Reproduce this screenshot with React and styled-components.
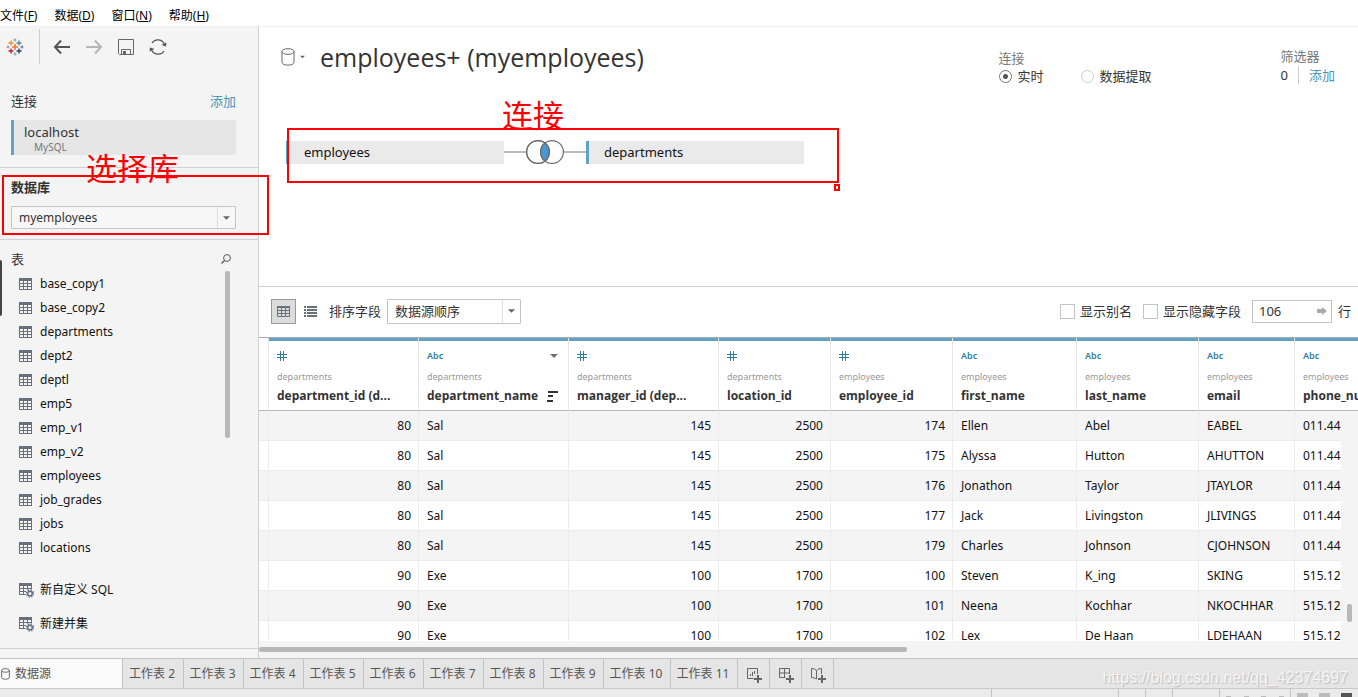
import React from "react";
import styled, { createGlobalStyle, css } from "styled-components";

const GlobalStyle = createGlobalStyle`
  *, *::before, *::after { box-sizing: border-box; }
  body {
    margin: 0;
    background: #fff;
    color: #111;
    font-family: "Noto Sans", "Noto Sans CJK SC", sans-serif;
    font-size: 13px;
    line-height: 20px;
  }
  button, input, select { font: inherit; color: inherit; margin: 0; }
  button { border: 0; padding: 0; background: none; cursor: pointer; }
  h1, h2, p, ul { margin: 0; padding: 0; font-size: inherit; font-weight: inherit; }
  ul { list-style: none; }
  a { color: #4996b9; text-decoration: none; }
  svg { display: block; flex: none; }
`;

const blue = "#5fa3c7";
const line = "#d0d0d0";

const Page = styled.div`
  display: flex;
  flex-direction: column;
  height: 100vh;
  overflow: hidden;
`;

const MenuBar = styled.nav`
  display: flex;
  flex: none;
  gap: 17px;
  height: 27px;
  padding-top: 6px;
  border-bottom: 1px solid #eee;
  font-size: 12px;
`;

const MenuItem = styled.button`
  height: 20px;
  line-height: 20px;
  white-space: nowrap;
  color: #000;
`;

const Body = styled.div`
  display: flex;
  flex: 1;
  min-height: 0;
`;

const Sidebar = styled.aside`
  position: relative;
  display: flex;
  flex-direction: column;
  flex: none;
  width: 259px;
  background: #f4f4f4;
  border-right: 1px solid ${line};
`;

const Toolbar = styled.div`
  display: flex;
  align-items: center;
  height: 39px;
  padding-left: 6px;
`;

const ToolSet = styled.div`
  display: flex;
  align-items: center;
  gap: 14px;
  height: 35px;
  margin-left: 15px;
  padding-left: 13px;
  border-left: 1px solid #ccc;
`;

const Connections = styled.section`
  height: 102px;
  padding: 25px 22px 0 11px;
  border-bottom: 1px solid ${line};
`;

const SectionHead = styled.div`
  display: flex;
  justify-content: space-between;
  align-items: center;
  height: 20px;
  color: #333;
`;

const Connection = styled.button`
  display: block;
  width: 100%;
  height: 35px;
  margin-top: 9px;
  padding: 2px 0 2px 10px;
  border-left: 3px solid ${blue};
  background: #e6e6e6;
  text-align: left;
  line-height: 18px;
  color: #333;
`;

const ConnectionKind = styled.span`
  display: block;
  padding-left: 10px;
  font-size: 10px;
  line-height: 12px;
  color: #777;
`;

const Database = styled.section`
  height: 72px;
  padding: 9px 22px 0 11px;
  border-bottom: 1px solid ${line};
  font-size: 12px;
`;

const FieldLabel = styled.label`
  display: block;
  margin-bottom: ${(p) => (p.$strong ? "9px" : 0)};
  font-size: 13px;
  font-weight: ${(p) => (p.$strong ? 700 : 400)};
  color: #333;
`;

const SelectBox = styled.div`
  display: grid;
  grid-template-columns: 1fr 18px;
  align-items: center;
  width: ${(p) => p.$width || "100%"};
  height: ${(p) => p.$height};
  border: 1px solid #c4c4c4;
  border-radius: 1px;
  background: ${(p) => p.$fill || "#fff"};

  > * { grid-row: 1; }
  > select { grid-column: 1 / 3; }
  > span { grid-column: 2; }
`;

const Select = styled.select`
  width: 100%;
  height: 100%;
  padding: 0 7px;
  border: 0;
  background: none;
  appearance: none;
  color: #333;
`;

const SelectArrow = styled.span`
  display: flex;
  align-items: center;
  justify-content: center;
  height: 100%;
  border-left: 1px solid #ddd;
  pointer-events: none;
`;

const Tables = styled.section`
  display: flex;
  flex: 1;
  flex-direction: column;
  min-height: 0;
  padding: 9px 27px 0 11px;
`;

const TableScroll = styled.div`
  display: flex;
  justify-content: space-between;
  align-items: flex-start;
  height: 290px;
`;

const TableList = styled.ul`
  padding: 3px 0 0 8px;
  font-size: 12px;
`;

const TableItem = styled.li`
  display: flex;
  align-items: center;
  gap: 8px;
  height: 24px;
`;

const Thumb = styled.div`
  flex: none;
  width: ${(p) => p.$w};
  height: ${(p) => p.$h};
  border-radius: 2px;
  background: #b8b8b8;
`;

const SideThumb = styled(Thumb)`
  margin: 2px 1px 0 0;
`;

const NewItems = styled.div`
  display: flex;
  flex-direction: column;
  gap: 14px;
  margin-top: 21px;
  padding-left: 8px;
`;

const NewItem = styled.button`
  display: flex;
  align-items: center;
  gap: 6px;
  height: 20px;
  font-size: 12px;
`;

const SideFoot = styled.div`
  flex: none;
  height: 10px;
  border-top: 1px solid ${line};
`;

const Main = styled.main`
  display: flex;
  flex: 1;
  flex-direction: column;
  min-width: 0;
`;

const Canvas = styled.section`
  position: relative;
  flex: none;
  height: 260px;
  padding: 10px 23px 0 22px;
  border-bottom: 1px solid ${line};
`;

const CanvasHead = styled.header`
  display: flex;
  height: 103px;
`;

const SourceButton = styled.button`
  display: flex;
  align-items: center;
  gap: 5px;
  height: 40px;
`;

const Title = styled.h1`
  flex: 1;
  padding-left: 15px;
  font-family: "Open Sans", "Noto Sans CJK SC", sans-serif;
  font-size: 25px;
  line-height: 40px;
  white-space: nowrap;
  color: #333;
`;

const Group = styled.div`
  padding-top: ${(p) => p.$top};
  line-height: 18px;
  white-space: nowrap;
  color: #777;
`;

const Options = styled.div`
  display: flex;
  gap: 37px;
  color: #333;
`;

const Option = styled.label`
  display: flex;
  align-items: center;
  gap: 6px;
  height: 18px;
`;

const Radio = styled.input`
  width: 13px;
  height: 13px;
  border: 1px solid ${(p) => (p.defaultChecked ? "#777" : "#ccc")};
  border-radius: 50%;
  appearance: none;

  &:checked { background: radial-gradient(circle, #555 2px, #fff 3px); }
`;

const FilterGroup = styled(Group)`
  margin-left: 129px;
`;

const FilterLine = styled.div`
  display: flex;
  align-items: center;
  height: 20px;
  color: #333;

  a {
    margin-left: 10px;
    padding-left: 10px;
    border-left: 1px solid #ccc;
  }
`;

const Join = styled.div`
  display: flex;
  align-items: center;
  padding-left: 5px;
`;

const JoinTable = styled.button`
  width: 218px;
  height: 23px;
  padding-left: 15px;
  border-left: 3px solid ${blue};
  background: #eaeaea;
  text-align: left;
  color: #111;
`;

const JoinLine = styled.span`
  width: 22px;
  height: 2px;
  background: #bbb;
`;

const Frame = styled.div`
  position: absolute;
  border: 2px solid #f00;
  pointer-events: none;
`;

const DatabaseFrame = styled(Frame)`
  z-index: 2;
  top: 148px;
  left: 2px;
  width: 267px;
  height: 60px;
`;

const JoinFrame = styled(Frame)`
  top: 101px;
  left: 28px;
  width: 552px;
  height: 55px;
`;

const FrameHandle = styled(Frame)`
  top: 157px;
  left: 575px;
  width: 6px;
  height: 7px;
`;

const Note = styled.p`
  position: absolute;
  z-index: 2;
  top: ${(p) => p.$top};
  left: ${(p) => p.$left};
  font-size: 31px;
  line-height: 40px;
  white-space: nowrap;
  color: #f00;
`;

const EdgeGrip = styled.div`
  position: absolute;
  top: 233px;
  left: 0;
  width: 2px;
  height: 56px;
  border-radius: 0 2px 2px 0;
  background: #444;
`;

const GridBar = styled.div`
  display: flex;
  flex: none;
  align-items: center;
  gap: 6px;
  height: 50px;
  padding: 0 7px 2px 12px;
  white-space: nowrap;
  color: #333;
`;

const ViewSwitch = styled.div`
  display: flex;
  gap: 2px;
`;

const ViewButton = styled.button`
  display: flex;
  align-items: center;
  justify-content: center;
  width: 25px;
  height: 25px;
  ${(p) => p.$on && css`
    border: 1px solid #999;
    background: #dcdcdc;
  `}
`;

const Spacer = styled.span`
  flex: 1;
`;

const CheckLabel = styled.label`
  display: flex;
  align-items: center;
  gap: 5px;
  margin-right: 5px;
`;

const Check = styled.input`
  width: 15px;
  height: 15px;
  border: 1px solid #c4c4c4;
  background: #fff;
  appearance: none;
`;

const RowCount = styled.div`
  display: flex;
  align-items: center;
  width: 80px;
  height: 23px;
  padding-right: 4px;
  border: 1px solid #c4c4c4;

  input {
    width: 0;
    flex: 1;
    padding: 0 6px;
    border: 0;
    outline: 0;
    background: none;
  }
`;

const GridArea = styled.div`
  position: relative;
  flex: 1;
  min-height: 0;
  overflow: hidden;
  border-top: 1px solid #aaa;
`;

const Grid = styled.table`
  width: 1122px;
  border-collapse: separate;
  border-spacing: 0;
  table-layout: fixed;
`;

const HeadCell = styled.th`
  height: 73px;
  padding: 8px 0 0 8px;
  border-left: 1px solid #e6e6e6;
  border-bottom: 1px solid #b8b8b8;
  box-shadow: inset 0 3px ${blue};
  vertical-align: top;
  text-align: left;
  font-weight: 400;
  overflow: hidden;
  white-space: nowrap;
`;

const GutterHead = styled.th`
  border-bottom: 1px solid #b8b8b8;
`;

const TypeLine = styled.div`
  display: flex;
  align-items: center;
  justify-content: space-between;
  height: 20px;
  padding-right: 10px;
  font-size: 9px;
  font-weight: 600;
  color: #2f7d9d;
`;

const SourceName = styled.div`
  margin-top: 1px;
  font-size: 9px;
  color: #999;
`;

const FieldName = styled.div`
  display: flex;
  align-items: center;
  justify-content: space-between;
  height: 18px;
  padding-right: 10px;
  font-family: "Open Sans", "Noto Sans CJK SC", sans-serif;
  font-size: 12px;
  font-weight: 700;
  color: #333;
`;

const Row = styled.tr`
  background: #fff;
  &:nth-child(odd) { background: #f4f4f4; }
`;

const Cell = styled.td`
  height: 30px;
  padding: 0 7px 0 8px;
  border-left: ${(p) => (p.$gutter ? 0 : "1px solid #ececec")};
  border-bottom: 1px solid #ececec;
  text-align: ${(p) => (p.$num ? "right" : "left")};
  overflow: hidden;
  white-space: nowrap;
  font-size: 12px;
  color: #111;
`;

const VTrack = styled.div`
  position: absolute;
  top: 73px;
  right: 0;
  bottom: 0;
  display: flex;
  align-items: flex-end;
  justify-content: center;
  width: 17px;
  padding-bottom: 19px;
  background: #f4f4f4;
`;

const HTrack = styled.div`
  flex: none;
  height: 17px;
  padding-top: 6px;
  background: #f4f4f4;
`;

const SheetTabs = styled.nav`
  position: relative;
  display: flex;
  flex: none;
  height: 31px;
  border-top: 1px solid #c4c4c4;
  border-bottom: 1px solid #c8c8c8;
  background: #e5e5e5;
`;

const SheetTab = styled.button`
  display: flex;
  align-items: center;
  justify-content: ${(p) => (p.$on ? "flex-start" : "center")};
  gap: 5px;
  width: ${(p) => p.$w};
  padding: 0 ${(p) => (p.$on ? 0 : "2px")} 0 ${(p) => (p.$on ? "1px" : 0)};
  border-right: 1px solid #c4c4c4;
  background: ${(p) => (p.$on ? "#fafafa" : "none")};
  font-size: 12px;
  white-space: nowrap;
  color: #555;
`;

const AddTab = styled(SheetTab)`
  padding: 2px 0 0 1px;
`;

const Watermark = styled.p`
  position: absolute;
  top: 9px;
  right: 10px;
  font-family: "Liberation Sans", sans-serif;
  font-size: 16px;
  color: #f5f5f5;
  text-shadow: 1px 1px 1px #bbb;
`;

const StatusBar = styled.footer`
  display: flex;
  flex: none;
  justify-content: flex-end;
  height: 8px;
  overflow: hidden;
  background: #ebebeb;
`;

const StatusCell = styled.span`
  display: flex;
  align-items: flex-end;
  justify-content: space-around;
  width: ${(p) => p.$w};
  border-left: 1px solid #c4c4c4;
`;

const StatusMark = styled.i`
  width: 11px;
  height: 4px;
  background: ${(p) => p.$tone};
`;

const NavMark = styled.i`
  width: 5px;
  height: 1px;
  background: #bbb;
`;

const Caret = ({ size = 7, color = "#666" }) => (
  <svg width={size} height="4" viewBox="0 0 8 4"><path d="M0 0h8L4 4z" fill={color} /></svg>
);

const Logo = () => {
  const plus = (x, y, r, c, w) => (
    <path key={`${x}-${y}`} d={`M${x - r} ${y}h${2 * r}M${x} ${y - r}v${2 * r}`} stroke={c} strokeWidth={w} />
  );
  return (
    <svg width="18" height="18" viewBox="0 0 18 18">
      {plus(9, 9, 3, "#eb762c", 1.5)}
      {plus(5, 5, 2.5, "#eb9129", 1.4)}
      {plus(13, 5, 2.5, "#59879b", 1.4)}
      {plus(5, 13, 2.5, "#c72035", 1.4)}
      {plus(13, 13, 2.5, "#1f447e", 1.4)}
      {plus(9, 2, 1.5, "#7099a6", 1)}
      {plus(9, 16, 1.5, "#7099a6", 1)}
      {plus(2, 9, 1.5, "#7099a6", 1)}
      {plus(16, 9, 1.5, "#5b6591", 1)}
    </svg>
  );
};

const Arrow = ({ back }) => (
  <svg width="18" height="16" viewBox="0 0 18 16" fill="none" stroke={back ? "#555" : "#b5b5b5"} strokeWidth="2">
    {back ? <path d="M8 1.5L2 8l6 6.5M2 8h15" /> : <path d="M10 1.5L16 8l-6 6.5M16 8H1" />}
  </svg>
);

const SaveIcon = () => (
  <svg width="18" height="18" viewBox="0 0 18 18" fill="none" stroke="#666">
    <path d="M1.5 1.5h15v15h-14l-1-1zM4.5 16.5v-5h9v5" />
    <path d="M6 13h3v3H6z" fill="#666" stroke="none" />
  </svg>
);

const RefreshIcon = () => (
  <svg width="18" height="18" viewBox="0 0 18 18" fill="none" stroke="#555" strokeWidth="1.2">
    <path d="M3 5a7 7 0 0 1 12.5 1.5M15 13A7 7 0 0 1 2.5 11.5" />
    <path d="M17.5 4.5l-.5 4-4.5-1.5zM.5 13.5l.5-4 4.5 1.5z" fill="#555" stroke="none" />
  </svg>
);

const TableIcon = ({ gear }) => (
  <svg width={gear ? 15 : 13} height={gear ? 15 : 12} viewBox={gear ? "0 0 15 15" : "0 0 13 12"}>
    <rect width="13" height="12" fill="#66707f" />
    <path d="M1 3h3v2H1zM5 3h3v2H5zM9 3h3v2H9zM1 6h3v2H1zM5 6h3v2H5zM9 6h3v2H9zM1 9h3v2H1zM5 9h3v2H5zM9 9h3v2H9z" fill="#f4f4f4" />
    {gear && (
      <g>
        <circle cx="11" cy="10.5" r="4.5" fill="#f4f4f4" />
        <circle cx="11" cy="10.5" r="3.5" fill="none" stroke="#66707f" strokeWidth="1.5" strokeDasharray="1.4 1.35" />
        <circle cx="11" cy="10.5" r="2.3" fill="none" stroke="#66707f" strokeWidth="1.4" />
      </g>
    )}
  </svg>
);

const GridIcon = () => (
  <svg width="13" height="11" viewBox="0 0 13 11" fill="none" stroke="#66707f">
    <path d="M.5.5h12v10H.5zM0 4.5h13M0 7.5h13M4.5 0v11M8.5 0v11" />
    <path d="M0 1h13" strokeWidth="2" />
  </svg>
);

const ListIcon = () => (
  <svg width="13" height="11" viewBox="0 0 13 11" stroke="#66707f" strokeWidth="2">
    <path d="M0 1h2M3 1h10M0 4h2M3 4h10M0 7h2M3 7h10M0 10h2M3 10h10" />
  </svg>
);

const SearchIcon = () => (
  <svg width="10" height="10" viewBox="0 0 10 10" fill="none" stroke="#555">
    <circle cx="6" cy="4" r="3.4" /><path d="M3.5 6.5L.5 9.5" strokeWidth="1.3" />
  </svg>
);

const Cylinder = ({ small }) => (
  <svg width={small ? 9 : 14} height={small ? 12 : 18} viewBox="0 0 14 18" fill="none" stroke="#666" strokeWidth={small ? 1.5 : 1}>
    <path d="M1 3.5v11C1 18 13 18 13 14.5v-11" />
    <ellipse cx="7" cy="3.5" rx="6" ry="2.8" />
  </svg>
);

const Venn = () => (
  <svg width="38" height="24" viewBox="0 0 38 24" stroke="#6b6b6b" strokeWidth="1.2">
    <circle cx="12" cy="12" r="11.4" fill="#fff" />
    <circle cx="26" cy="12" r="11.4" fill="#fff" />
    <path d="M19 3a11.4 11.4 0 0 1 0 18a11.4 11.4 0 0 1 0-18z" fill="#4797d2" />
    <circle cx="12" cy="12" r="11.4" fill="none" />
  </svg>
);

const HashIcon = () => (
  <svg width="10" height="10" viewBox="0 0 10 10" stroke="#2f7d9d">
    <path d="M3.5 0v10M6.5 0v10M0 3.5h10M0 6.5h10" />
  </svg>
);

const SortIcon = () => (
  <svg width="11" height="11" viewBox="0 0 11 11" stroke="#333" strokeWidth="2">
    <path d="M1 1h10M1 5h5M0 10h6" />
  </svg>
);

const GoIcon = () => (
  <svg width="10" height="8" viewBox="0 0 10 8"><path d="M0 2h5V0l5 4-5 4V6H0z" fill="#aaa" /></svg>
);

const AddIcon = ({ kind }) => (
  <svg width="16" height="16" viewBox="0 0 16 16" fill="none" stroke="#666">
    {kind === "sheet" && <path d="M11.5 7V1.5H1.5v10h6M4.5 9V7M6.5 9V5M8.5 7V4" />}
    {kind === "dashboard" && <path d="M11.5 7V1.5H1.5v9h6M1.5 6h10M6.5 1.5v9" />}
    {kind === "story" && <path d="M11.5 7V1.5L8.5 2 6.5 3.5 4.5 2l-3-.5v9l3 .5 2 1v-8" />}
    <path d="M12 8v8M8 12h8" strokeWidth="2" />
  </svg>
);

const tables = ["base_copy1", "base_copy2", "departments", "dept2", "deptl", "emp5", "emp_v1", "emp_v2", "employees", "job_grades", "jobs", "locations"];

const columns = [
  { name: "department_id (d...", source: "departments", num: true, width: 150 },
  { name: "department_name", source: "departments", width: 150, sorted: true },
  { name: "manager_id (dep...", source: "departments", num: true, width: 150 },
  { name: "location_id", source: "departments", num: true, width: 112 },
  { name: "employee_id", source: "employees", num: true, width: 122 },
  { name: "first_name", source: "employees", width: 124 },
  { name: "last_name", source: "employees", width: 122 },
  { name: "email", source: "employees", width: 96 },
  { name: "phone_nu", source: "employees", width: 87 },
];

const rows = [
  [80, "Sal", 145, 2500, 174, "Ellen", "Abel", "EABEL", "011.44"],
  [80, "Sal", 145, 2500, 175, "Alyssa", "Hutton", "AHUTTON", "011.44"],
  [80, "Sal", 145, 2500, 176, "Jonathon", "Taylor", "JTAYLOR", "011.44"],
  [80, "Sal", 145, 2500, 177, "Jack", "Livingston", "JLIVINGS", "011.44"],
  [80, "Sal", 145, 2500, 179, "Charles", "Johnson", "CJOHNSON", "011.44"],
  [90, "Exe", 100, 1700, 100, "Steven", "K_ing", "SKING", "515.12"],
  [90, "Exe", 100, 1700, 101, "Neena", "Kochhar", "NKOCHHAR", "515.12"],
  [90, "Exe", 100, 1700, 102, "Lex", "De Haan", "LDEHAAN", "515.12"],
];

const menus = [["文件", "F"], ["数据", "D"], ["窗口", "N"], ["帮助", "H"]];

const sheets = [2, 3, 4, 5, 6, 7, 8, 9, 10, 11];
const sheetWidth = (n) => (n === 2 ? "61px" : n > 9 ? "67px" : "60px");

export default function App() {
  return (
    <Page>
      <GlobalStyle />
      <MenuBar>
        {menus.map(([text, key]) => (
          <MenuItem key={key}>{text}(<u>{key}</u>)</MenuItem>
        ))}
      </MenuBar>
      <Body>
        <Sidebar>
          <Toolbar>
            <Logo />
            <ToolSet>
              <button aria-label="后退"><Arrow back /></button>
              <button aria-label="前进"><Arrow /></button>
              <button aria-label="保存"><SaveIcon /></button>
              <button aria-label="刷新"><RefreshIcon /></button>
            </ToolSet>
          </Toolbar>
          <Connections>
            <SectionHead><h2>连接</h2><a href="#add-connection">添加</a></SectionHead>
            <Connection>localhost<ConnectionKind>MySQL</ConnectionKind></Connection>
          </Connections>
          <Database>
            <FieldLabel $strong htmlFor="database">数据库</FieldLabel>
            <SelectBox $height="23px" $fill="#f7f7f7">
              <Select id="database"><option>myemployees</option></Select>
              <SelectArrow><Caret /></SelectArrow>
            </SelectBox>
          </Database>
          <Tables>
            <SectionHead><h2>表</h2><button aria-label="搜索"><SearchIcon /></button></SectionHead>
            <TableScroll>
              <TableList>
                {tables.map((t) => <TableItem key={t}><TableIcon />{t}</TableItem>)}
              </TableList>
              <SideThumb $w="5px" $h="167px" />
            </TableScroll>
            <NewItems>
              <NewItem><TableIcon gear />新自定义 SQL</NewItem>
              <NewItem><TableIcon gear />新建并集</NewItem>
            </NewItems>
          </Tables>
          <SideFoot />
          <EdgeGrip />
          <DatabaseFrame />
          <Note $top="121px" $left="86px">选择库</Note>
        </Sidebar>
        <Main>
          <Canvas>
            <CanvasHead>
              <SourceButton aria-label="数据源"><Cylinder /><Caret size={5} /></SourceButton>
              <Title>employees+ (myemployees)</Title>
              <Group $top="12px">
                <div>连接</div>
                <Options>
                  <Option><Radio type="radio" name="mode" defaultChecked />实时</Option>
                  <Option><Radio type="radio" name="mode" />数据提取</Option>
                </Options>
              </Group>
              <FilterGroup $top="10px">
                <div>筛选器</div>
                <FilterLine>0<a href="#add-filter">添加</a></FilterLine>
              </FilterGroup>
            </CanvasHead>
            <Join>
              <JoinTable>employees</JoinTable>
              <JoinLine />
              <Venn />
              <JoinLine />
              <JoinTable>departments</JoinTable>
            </Join>
            <JoinFrame />
            <FrameHandle />
            <Note $top="68px" $left="243px">连接</Note>
          </Canvas>
          <GridBar>
            <ViewSwitch>
              <ViewButton $on aria-label="网格"><GridIcon /></ViewButton>
              <ViewButton aria-label="列表"><ListIcon /></ViewButton>
            </ViewSwitch>
            <FieldLabel htmlFor="sort">排序字段</FieldLabel>
            <SelectBox $width="134px" $height="25px">
              <Select id="sort"><option>数据源顺序</option></Select>
              <SelectArrow><Caret /></SelectArrow>
            </SelectBox>
            <Spacer />
            <CheckLabel><Check type="checkbox" />显示别名</CheckLabel>
            <CheckLabel><Check type="checkbox" />显示隐藏字段</CheckLabel>
            <RowCount><input id="rows" defaultValue="106" /><GoIcon /></RowCount>
            <label htmlFor="rows">行</label>
          </GridBar>
          <GridArea>
            <Grid>
              <colgroup>
                <col width="9" />
                {columns.map((c) => <col key={c.name} width={c.width} />)}
              </colgroup>
              <thead>
                <tr>
                  <GutterHead />
                  {columns.map((c) => (
                    <HeadCell key={c.name}>
                      <TypeLine>{c.num ? <HashIcon /> : "Abc"}{c.sorted && <Caret size={8} color="#66707f" />}</TypeLine>
                      <SourceName>{c.source}</SourceName>
                      <FieldName>{c.name}{c.sorted && <SortIcon />}</FieldName>
                    </HeadCell>
                  ))}
                </tr>
              </thead>
              <tbody>
                {rows.map((r) => (
                  <Row key={r[4]}>
                    <Cell $gutter />
                    {r.map((v, i) => <Cell key={columns[i].name} $num={columns[i].num}>{v}</Cell>)}
                  </Row>
                ))}
              </tbody>
            </Grid>
            <VTrack><Thumb $w="5px" $h="18px" /></VTrack>
          </GridArea>
          <HTrack><Thumb $w="59%" $h="5px" /></HTrack>
        </Main>
      </Body>
      <SheetTabs>
        <SheetTab $on $w="123px"><Cylinder small />数据源</SheetTab>
        {sheets.map((n) => <SheetTab key={n} $w={sheetWidth(n)}>工作表 {n}</SheetTab>)}
        <AddTab $w="32px" aria-label="新建工作表"><AddIcon kind="sheet" /></AddTab>
        <AddTab $w="32px" aria-label="新建仪表板"><AddIcon kind="dashboard" /></AddTab>
        <AddTab $w="32px" aria-label="新建故事"><AddIcon kind="story" /></AddTab>
        <Watermark>https://blog.csdn.net/qq_42374697</Watermark>
      </SheetTabs>
      <StatusBar>
        <StatusCell $w="127px" />
        <StatusCell $w="27px" />
        <StatusCell $w="27px" />
        <StatusCell $w="47px" />
        <StatusCell $w="71px"><NavMark /><NavMark /><NavMark /><NavMark /></StatusCell>
        <StatusCell $w="68px"><StatusMark $tone="#bbb" /><StatusMark $tone="#bbb" /><StatusMark $tone="#555" /></StatusCell>
      </StatusBar>
    </Page>
  );
}
